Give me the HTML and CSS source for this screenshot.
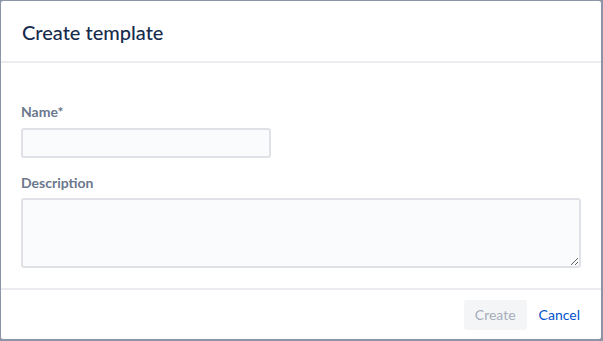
FILE: index.html
```html
<!DOCTYPE html>
<html>
<head>
<meta charset="utf-8">
<link rel="stylesheet" href="styles.css">
</head>
<body>
<div class="dialog">
  <div class="header"><h1 class="title">Create template</h1></div>
  <div class="body">
    <label class="label">Name*</label>
    <input class="input name-input" type="text">
    <label class="label desc-label">Description</label>
    <textarea class="input textarea"></textarea>
  </div>
  <div class="footer">
    <button class="btn btn-create" disabled>Create</button>
    <button class="btn btn-link">Cancel</button>
  </div>
</div>
</body>
</html>
```
FILE: styles.css
```css
html, body { margin: 0; padding: 0; }
body {
  background: #8c95a6;
  width: 603px;
  height: 341px;
  padding: 1px 2px 2px 1px;
  box-sizing: border-box;
  font-family: "Lato", "Open Sans", sans-serif;
}
.dialog {
  background: #fff;
  height: 338px;
  border-radius: 2px;
  display: flex;
  flex-direction: column;
}
.header {
  height: 62px;
  flex: none;
  padding: 2px 21px 0;
  display: flex;
  align-items: center;
  border-bottom: 2px solid #ebecf0;
  box-sizing: border-box;
}
.title {
  margin: 0;
  font-size: 20px;
  font-weight: 500;
  color: #172b4d;
}
.body {
  flex: none;
  padding: 41px 20px 20px 20px;
  display: flex;
  flex-direction: column;
  align-items: flex-start;
  border-bottom: 2px solid #ebecf0;
}
.label {
  font-size: 14px;
  font-weight: 700;
  color: #6b778c;
  line-height: 16px;
  margin-bottom: 8px;
}
.desc-label { margin-top: 17px; margin-bottom: 7px; }
.input {
  display: block;
  background: #fafbfc;
  border: 2px solid #dfe1e6;
  border-radius: 3px;
  box-sizing: border-box;
  font-family: inherit;
  margin: 0;
}
.name-input { width: 250px; height: 30px; }
.textarea { width: 560px; height: 70px; resize: both; }
.footer {
  flex: 1;
  display: flex;
  justify-content: flex-end;
  align-items: center;
  padding: 0 21px 0 20px;
  gap: 12px;
}
.btn {
  font-family: inherit;
  font-size: 14px;
  border: none;
  border-radius: 3px;
  height: 30px;
  padding: 0 11px;
}
.btn-create { background: #f4f5f7; color: #a5adba; }
.btn-link { background: transparent; color: #0052cc; padding: 0; }
```
